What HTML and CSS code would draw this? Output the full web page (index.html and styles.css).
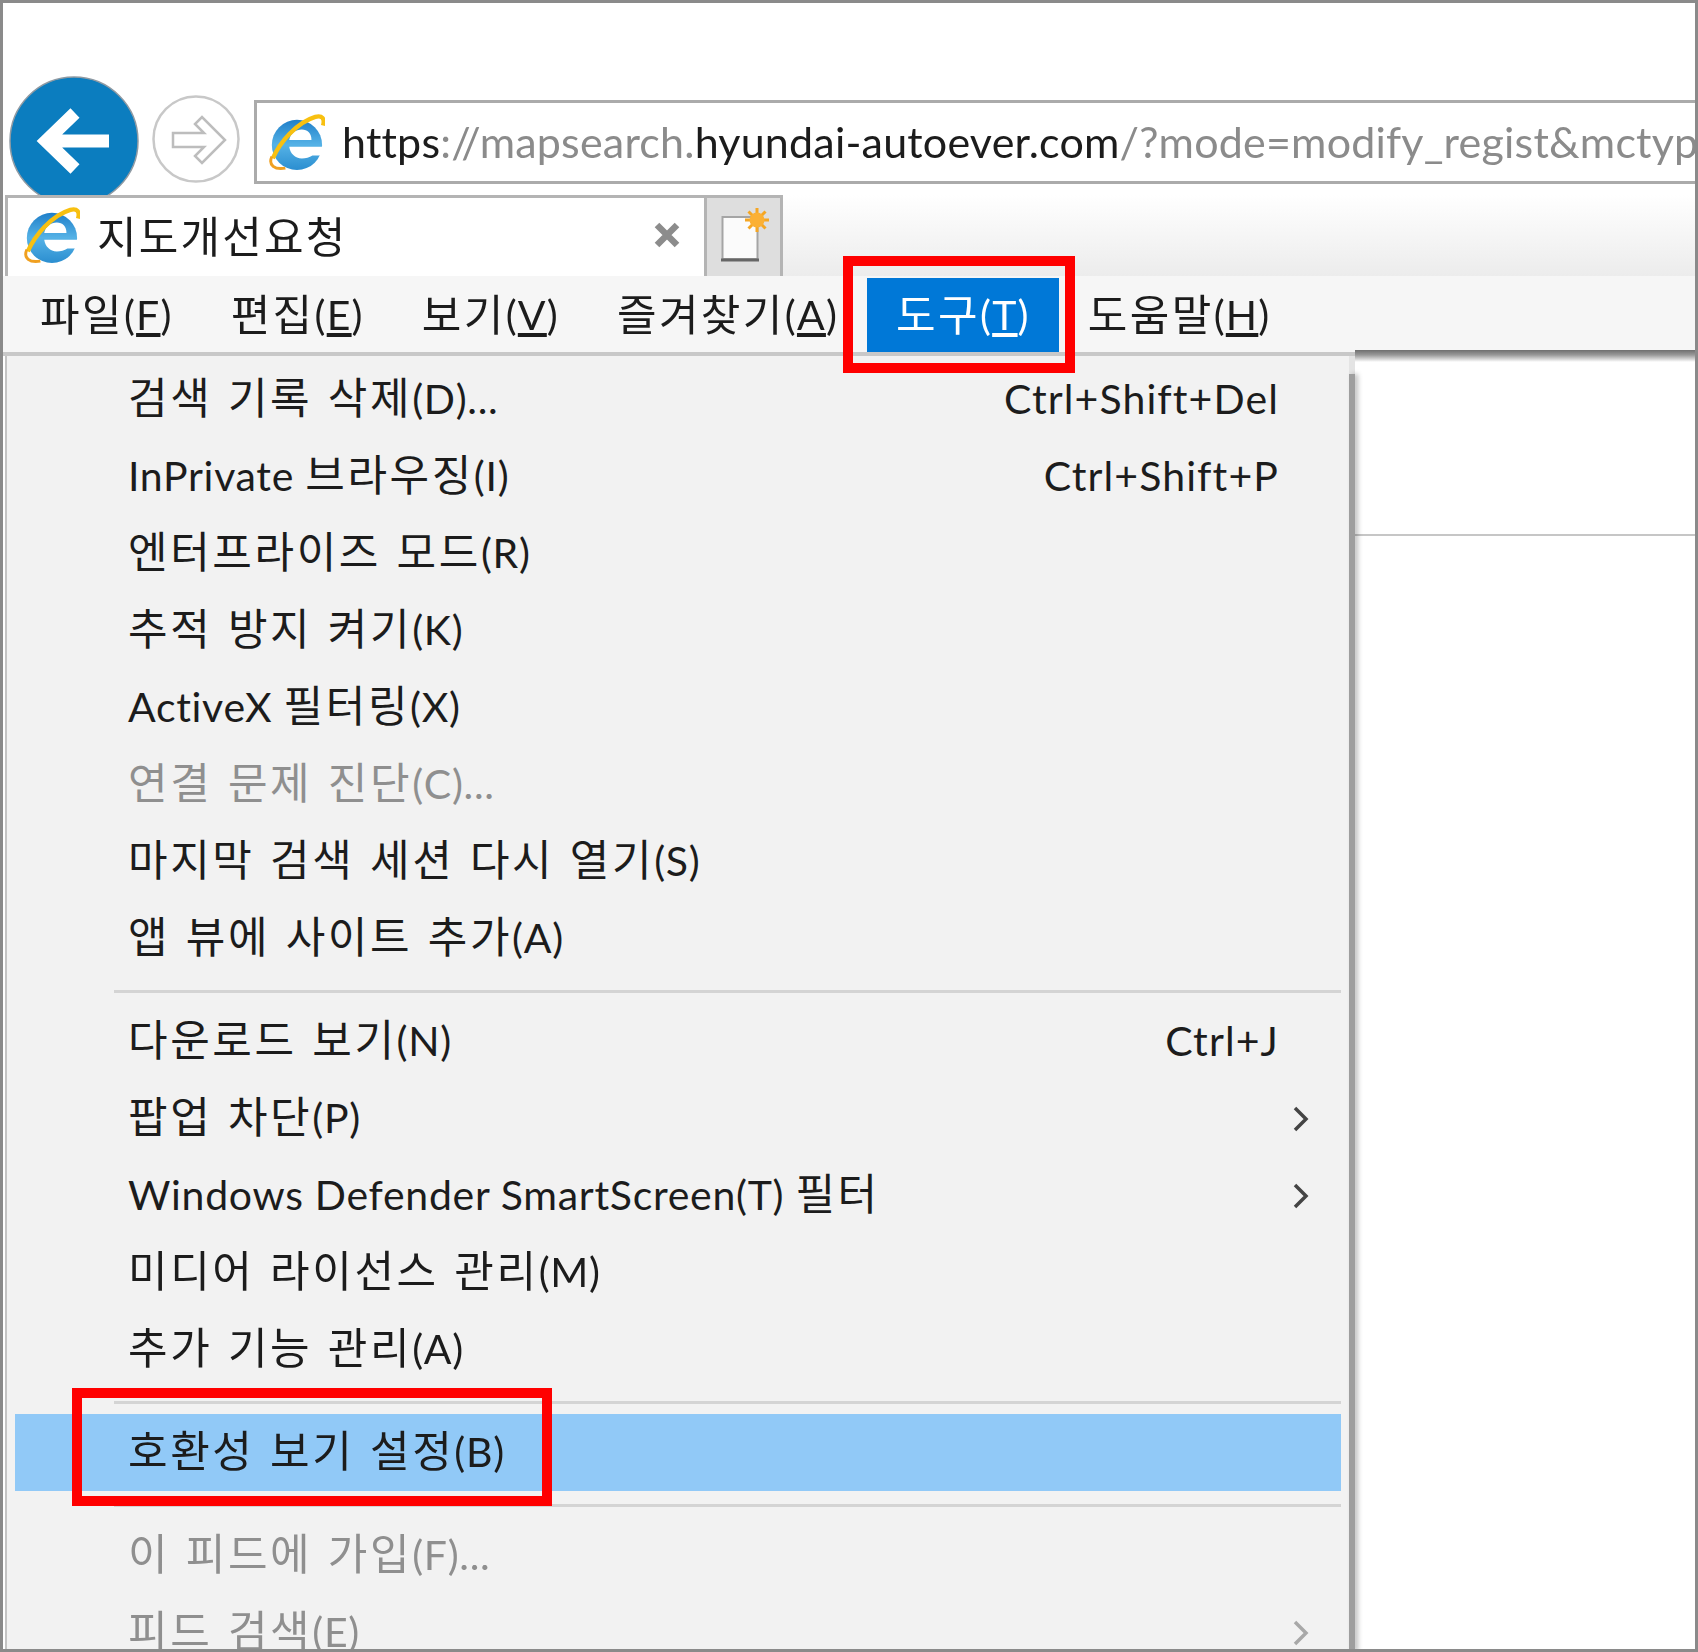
FILE: index.html
```html
<!DOCTYPE html>
<html lang="ko">
<head>
<meta charset="utf-8">
<title>호환성 보기 설정</title>
<link rel="stylesheet" href="styles.css">
</head>
<body>
<svg class="defs" width="0" height="0" aria-hidden="true">
  <defs>
    <linearGradient id="ieblue" x1="0" y1="0" x2="0" y2="1">
      <stop offset="0" stop-color="#1f7fc9"/>
      <stop offset="0.5" stop-color="#55b2e6"/>
      <stop offset="1" stop-color="#2b8ed0"/>
    </linearGradient>
    <symbol id="ie" viewBox="0 0 60 60">
      <circle cx="31" cy="33" r="26" fill="url(#ieblue)"/>
      <path d="M23 28C24 21 30 17 36 17C42 17 46 21 46 28Z" fill="#fff"/>
      <path d="M23 35H60V44H47C44 46 40 47 36 47C29 47 24 42 23 35Z" fill="#fff"/>
      <path d="M6 47C13 31 30 10 50 4C57 2 60 6 58 13" stroke="#f8c010" stroke-width="4.5" fill="none"/>
      <path d="M5 45C1 54 8 59 19 57" stroke="#f0a020" stroke-width="3" fill="none"/>
    </symbol>
  </defs>
</svg>
<div class="frame">
  <div class="screen">
    <header class="nav">
      <svg class="back" viewBox="0 0 130 130">
        <circle cx="65" cy="65" r="64" fill="#0b7dbf" stroke="#8f9aa3" stroke-width="1.5"/>
        <path d="M66 37L37 65L66 93M37 65H100" fill="none" stroke="#fff" stroke-width="13"/>
      </svg>
      <svg class="forward" viewBox="0 0 88 88">
        <circle cx="44" cy="44" r="42.5" fill="#fff" stroke="#c8c8c8" stroke-width="2.5"/>
        <path d="M21 38H52L43 29L50 22L73 45L50 68L43 61L52 52H21Z" fill="#fff" stroke="#bdbdbd" stroke-width="2.5"/>
      </svg>
      <div class="address">
        <svg class="ie addr-ie"><use href="#ie"/></svg>
        <span class="url"><span class="dark">https</span>://mapsearch.<span class="dark">hyundai-autoever.com</span>/?mode=modify_regist&amp;mctype</span>
      </div>
    </header>
    <div class="tabs">
      <div class="tab">
        <svg class="ie"><use href="#ie"/></svg>
        <span class="tab-title ko">지도개선요청</span>
        <svg class="close" viewBox="0 0 30 30"><path d="M5 5L25 25M25 5L5 25" stroke="#8c8c8c" stroke-width="6.5"/></svg>
      </div>
      <div class="new-tab">
        <svg class="new-icon" viewBox="0 0 50 58">
          <rect x="1.5" y="11" width="35" height="42" fill="#fbfbfb" stroke="#a5a5a5" stroke-width="2"/>
          <path d="M0 54H38" stroke="#666" stroke-width="3"/>
          <path d="M36 2V26M24 14H48M27.5 5.5L44.5 22.5M44.5 5.5L27.5 22.5" stroke="#f5a623" stroke-width="3"/>
          <circle cx="36" cy="14" r="7.5" fill="#fbb034"/>
        </svg>
      </div>
      <div class="tab-rest"></div>
    </div>
    <nav class="menubar">
      <span class="top-item"><span class="ko">파일</span>(<u>F</u>)</span>
      <span class="top-item"><span class="ko">편집</span>(<u>E</u>)</span>
      <span class="top-item"><span class="ko">보기</span>(<u>V</u>)</span>
      <span class="top-item"><span class="ko">즐겨찾기</span>(<u>A</u>)</span>
      <span class="top-item active"><span class="ko">도구</span>(<u>T</u>)</span>
      <span class="top-item"><span class="ko">도움말</span>(<u>H</u>)</span>
    </nav>
    <div class="body">
      <div class="menu">
        <div class="row"><span><span class="ko">검색 기록 삭제</span>(D)...</span><span class="key">Ctrl+Shift+Del</span></div>
        <div class="row"><span>InPrivate <span class="ko">브라우징</span>(I)</span><span class="key">Ctrl+Shift+P</span></div>
        <div class="row"><span><span class="ko">엔터프라이즈 모드</span>(R)</span></div>
        <div class="row"><span><span class="ko">추적 방지 켜기</span>(K)</span></div>
        <div class="row"><span>ActiveX <span class="ko">필터링</span>(X)</span></div>
        <div class="row off"><span><span class="ko">연결 문제 진단</span>(C)...</span></div>
        <div class="row"><span><span class="ko">마지막 검색 세션 다시 열기</span>(S)</span></div>
        <div class="row"><span><span class="ko">앱 뷰에 사이트 추가</span>(A)</span></div>
        <div class="sep"></div>
        <div class="row"><span><span class="ko">다운로드 보기</span>(N)</span><span class="key">Ctrl+J</span></div>
        <div class="row"><span><span class="ko">팝업 차단</span>(P)</span><svg class="chev" viewBox="0 0 16 26"><path d="M2 2L13 13L2 24" /></svg></div>
        <div class="row"><span>Windows Defender SmartScreen(T) <span class="ko">필터</span></span><svg class="chev" viewBox="0 0 16 26"><path d="M2 2L13 13L2 24" /></svg></div>
        <div class="row"><span><span class="ko">미디어 라이선스 관리</span>(M)</span></div>
        <div class="row"><span><span class="ko">추가 기능 관리</span>(A)</span></div>
        <div class="sep"></div>
        <div class="row hl"><span><span class="ko">호환성 보기 설정</span>(B)</span></div>
        <div class="sep"></div>
        <div class="row off"><span><span class="ko">이 피드에 가입</span>(F)...</span></div>
        <div class="row off"><span><span class="ko">피드 검색</span>(E)</span><svg class="chev" viewBox="0 0 16 26"><path d="M2 2L13 13L2 24" /></svg></div>
      </div>
      <div class="page"><div class="page-line"></div></div>
    </div>
  </div>
  <div class="mark mark-tools"></div>
  <div class="mark mark-compat"></div>
</div>
</body>
</html>
```

FILE: styles.css
```css
* { box-sizing: border-box; }
html, body { margin: 0; padding: 0; background: #fff; }
.defs { position: absolute; }
.frame {
  position: relative;
  width: 1698px;
  height: 1652px;
  border: 3px solid #8a8a8a;
  overflow: hidden;
  background: #fff;
  font-family: "Lato", "Noto Sans CJK KR", sans-serif;
  line-height: 50px;
  color: #1c1c1c;
}
.screen { filter: blur(0.6px); }
.ko { font-size: 43px; letter-spacing: 2.6px; word-spacing: 2px; }

.nav {
  height: 192px;
  overflow: hidden;
  display: flex;
  align-items: flex-start;
  padding: 73px 0 0 6px;
}
.back { width: 130px; height: 130px; flex: none; }
.forward { width: 88px; height: 88px; flex: none; margin: 19px 0 0 13px; }
.address {
  flex: none;
  width: 1500px;
  height: 84px;
  margin: 24px 0 0 14px;
  border: 3px solid #ababab;
  border-right: 0;
  display: flex;
  align-items: center;
  padding-left: 10px;
  white-space: nowrap;
}
.ie { width: 58px; height: 58px; flex: none; display: block; }
.url { margin-left: 17px; font-size: 43px; color: #8b8b8b; letter-spacing: 0.2px; }
.dark { color: #1c1c1c; }

.tabs { display: flex; height: 81px; }
.tab {
  width: 699px;
  margin-left: 2px;
  border-top: 3px solid #b4b4b4;
  border-left: 3px solid #b4b4b4;
  background: #fff;
  display: flex;
  align-items: center;
  padding: 0 0 4px 14px;
}
.tab-title { margin: 4px 0 0 17px; flex: 1; letter-spacing: 2.2px; }
.close { width: 30px; height: 30px; margin-right: 22px; flex: none; }
.new-tab {
  width: 79px;
  border: 3px solid #b4b4b4;
  border-bottom: 0;
  background: #dedede;
  padding: 8px 0 0 14px;
}
.new-icon { width: 50px; height: 58px; display: block; }
.tab-rest { flex: 1; background: linear-gradient(#fff, #ececec); }

.menubar {
  display: flex;
  height: 80px;
  padding: 2px 0 0 8px;
  background: #f6f6f6;
  border-bottom: 4px solid #c8c8c8;
  font-size: 41px;
  white-space: nowrap;
}
.top-item { padding: 0 29px; display: flex; align-items: center; letter-spacing: 1.2px; }
.top-item .ko { letter-spacing: 2.4px; }
.active { background: #0078d7; color: #fff; }

.body { display: flex; height: 1296px; }
.menu {
  position: relative;
  width: 1350px;
  flex: none;
  padding: 5px 8px 0 8px;
  margin-left: 2px;
  background: #f2f2f2;
  border-left: 2px solid #c4c4c4;
  border-right: 6px solid #e4e4e4;
  font-size: 41px;
}
.menu::after {
  content: "";
  position: absolute;
  top: 18px;
  bottom: 0;
  right: -6px;
  width: 6px;
  background: #9e9e9e;
  box-shadow: 3px 0 5px rgba(0, 0, 0, 0.25);
}
.row {
  height: 77px;
  display: flex;
  align-items: center;
  justify-content: space-between;
  padding: 0 32px 2px 113px;
  white-space: nowrap;
  letter-spacing: 0.7px;
}
.key { margin-right: 30px; letter-spacing: 1.1px; }
.off { color: #8f8f8f; }
.hl { background: #91c9f7; }
.sep { height: 3px; margin: 13px 0 10px 99px; background: #d4d4d4; }
.chev { width: 16px; height: 26px; flex: none; margin-top: 2px; }
.chev path { fill: none; stroke: #444; stroke-width: 3.5; }
.off .chev path { stroke: #a8a8a8; }

.page {
  flex: 1;
  margin-top: -6px;
  padding-top: 184px;
  background: linear-gradient(#6f6f6f, #999 5px, #fff 12px) no-repeat;
  background-size: 100% 12px;
}
.page-line { height: 2px; background: #c6c6c6; }

.mark { position: absolute; border: 10px solid #f00; }
.mark-tools { left: 840px; top: 253px; width: 232px; height: 117px; }
.mark-compat { left: 69px; top: 1385px; width: 480px; height: 118px; }
```
